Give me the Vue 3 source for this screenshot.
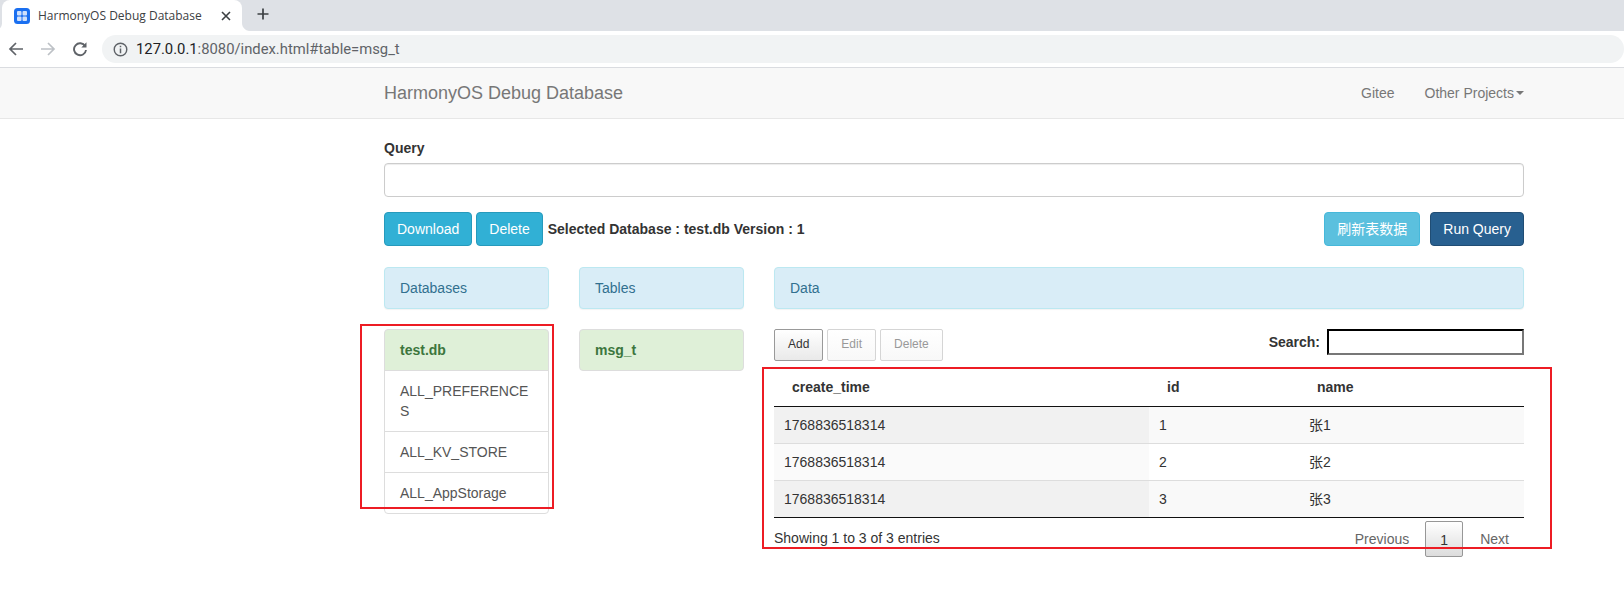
<script setup>
const lists = ['ALL_PREFERENCES', 'ALL_KV_STORE', 'ALL_AppStorage']
const rows = [
  { t: '1768836518314', id: 1, name: '张1' },
  { t: '1768836518314', id: 2, name: '张2' },
  { t: '1768836518314', id: 3, name: '张3' }
]
</script>

<template>
  <div class="page">
    <div class="tabstrip">
      <div class="tab">
        <svg class="favicon" width="16" height="16" viewBox="0 0 16 16">
          <rect width="16" height="16" rx="3.5" fill="#1a6ff0" />
          <rect x="3" y="3" width="4.5" height="4.5" rx="1" fill="#cfe0fb" />
          <rect x="8.5" y="3" width="4.5" height="4.5" rx="1" fill="#cfe0fb" />
          <rect x="3" y="8.5" width="4.5" height="4.5" rx="1" fill="#cfe0fb" />
          <rect x="8.5" y="8.5" width="4.5" height="4.5" rx="1" fill="#cfe0fb" />
        </svg>
        <span class="tabtitle">HarmonyOS Debug Database</span>
        <svg class="tabclose" width="10" height="10" viewBox="0 0 10 10">
          <path d="M1 1L9 9M9 1L1 9" stroke="#3c4043" stroke-width="1.6" fill="none" />
        </svg>
      </div>
      <svg class="newtab" width="12" height="12" viewBox="0 0 12 12">
        <path d="M6 0.5V11.5M0.5 6H11.5" stroke="#3c4043" stroke-width="1.7" fill="none" />
      </svg>
    </div>
    <div class="toolbar">
      <svg class="navicon" width="16" height="16" viewBox="0 0 16 16">
        <path d="M15 8H2M8 2L2 8L8 14" stroke="#5f6368" stroke-width="1.7" fill="none" />
      </svg>
      <svg class="navicon fwd" width="16" height="16" viewBox="0 0 16 16">
        <path d="M1 8H14M8 2L14 8L8 14" stroke="#bdc1c6" stroke-width="1.7" fill="none" />
      </svg>
      <svg class="navicon reload" width="16" height="16" viewBox="0 0 16 16">
        <path d="M13.2 5.2A6 6 0 1 0 14 9" stroke="#5f6368" stroke-width="1.9" fill="none" />
        <path d="M14.5 1.2V6.4H9.3Z" fill="#5f6368" />
      </svg>
      <div class="omnibox">
        <svg width="15" height="15" viewBox="0 0 16 16">
          <circle cx="8" cy="8" r="6.7" stroke="#5f6368" stroke-width="1.5" fill="none" />
          <path d="M8 7V12M8 4V5.6" stroke="#5f6368" stroke-width="1.6" fill="none" />
        </svg>
        <span class="url"><span class="host">127.0.0.1</span>:8080/index.html#table=msg_t</span>
      </div>
    </div>

    <nav class="navbar">
      <div class="container navinner">
        <span class="brand">HarmonyOS Debug Database</span>
        <div class="navlinks">
          <span>Gitee</span>
          <span class="dropdown">Other Projects<i class="caret"></i></span>
        </div>
      </div>
    </nav>

    <main class="container">
      <label class="qlabel">Query</label>
      <div class="qinput"></div>
      <div class="actions">
        <div class="actions-left">
          <button class="btn info-dark">Download</button>
          <button class="btn info-dark">Delete</button>
          <strong class="selected">Selected Database : test.db Version : 1</strong>
        </div>
        <div class="actions-right">
          <button class="btn info-light">刷新表数据</button>
          <button class="btn primary">Run Query</button>
        </div>
      </div>

      <div class="columns">
        <section>
          <div class="heading">Databases</div>
          <ul class="listgroup">
            <li class="active">test.db</li>
            <li v-for="l in lists" :key="l">{{ l }}</li>
          </ul>
        </section>
        <section>
          <div class="heading">Tables</div>
          <ul class="listgroup">
            <li class="active">msg_t</li>
          </ul>
        </section>
        <section>
          <div class="heading">Data</div>
          <div class="dt-top">
            <div class="dt-buttons">
              <button class="dtbtn">Add</button>
              <button class="dtbtn off">Edit</button>
              <button class="dtbtn off">Delete</button>
            </div>
            <div class="search"><b>Search:</b><span class="searchbox"></span></div>
          </div>
          <table class="dt">
            <colgroup>
              <col class="c1" /><col class="c2" /><col class="c3" />
            </colgroup>
            <thead>
              <tr><th>create_time</th><th>id</th><th>name</th></tr>
            </thead>
            <tbody>
              <tr v-for="r in rows" :key="r.id">
                <td class="sorted">{{ r.t }}</td>
                <td>{{ r.id }}</td>
                <td>{{ r.name }}</td>
              </tr>
            </tbody>
          </table>
          <div class="dt-bottom">
            <span class="info">Showing 1 to 3 of 3 entries</span>
            <div class="pager">
              <span class="plink prev">Previous</span>
              <span class="pcur">1</span>
              <span class="plink next">Next</span>
            </div>
          </div>
        </section>
      </div>
    </main>

    <div class="mark mark-a"></div>
    <div class="mark mark-b"></div>
  </div>
</template>

<style>
html, body { margin: 0; background: #fff; }
</style>

<style scoped>
.page {
  position: relative;
  width: 1624px;
  height: 590px;
  overflow: hidden;
  font-family: "Liberation Sans", Arial, "Noto Sans CJK SC", sans-serif;
  font-size: 14px;
  line-height: 20px;
  color: #333;
  background: #fff;
}
.tabstrip {
  height: 31px;
  background: #dee1e6;
  display: flex;
  align-items: flex-start;
  box-sizing: border-box;
  padding-left: 2px;
}
.tab {
  position: relative;
  width: 240px;
  height: 31px;
  box-sizing: border-box;
  background: #fff;
  border-radius: 8px 8px 0 0;
  display: flex;
  align-items: center;
  padding-left: 12px;
}
.tab::before,
.tab::after {
  content: "";
  position: absolute;
  bottom: 0;
  width: 8px;
  height: 8px;
}
.tab::before {
  left: -8px;
  background: radial-gradient(circle at 0 0, #dee1e6 7.5px, #fff 8.5px);
}
.tab::after {
  right: -8px;
  background: radial-gradient(circle at 100% 0, #dee1e6 7.5px, #fff 8.5px);
}
.favicon { flex: none; }
.tabtitle {
  margin-left: 8px;
  font-family: "Open Sans", "Noto Sans", sans-serif;
  font-size: 12px;
  color: #3c4043;
  width: 183px;
  white-space: nowrap;
}
.tabclose { margin-left: 0; }
.newtab { margin: 8px 0 0 15px; }
.toolbar {
  height: 36px;
  box-sizing: border-box;
  background: #fff;
  display: flex;
  align-items: center;
  padding-left: 8px;
}
.navicon { flex: none; }
.fwd { margin-left: 16px; }
.reload { margin-left: 16px; }
.omnibox {
  margin-left: 14px;
  flex: 1;
  height: 28px;
  background: #f1f3f4;
  border-radius: 14px;
  display: flex;
  align-items: center;
  padding-left: 11px;
}
.url {
  margin-left: 8px;
  font-family: Roboto, "Open Sans", sans-serif;
  font-size: 14.8px;
  color: #5f6368;
}
.host { color: #202124; }
.navbar {
  height: 52px;
  box-sizing: border-box;
  background: #f8f8f8;
  border-top: 1px solid #dadce0;
  border-bottom: 1px solid #e7e7e7;
}
.container {
  width: 1140px;
  margin-left: 384px;
}
.navinner {
  height: 50px;
  display: flex;
  justify-content: space-between;
  align-items: center;
}
.brand { font-size: 18px; color: #777; }
.navlinks { display: flex; gap: 30px; color: #777; }
.dropdown { display: flex; align-items: center; }
.caret {
  margin-left: 2px;
  border-top: 4px solid #777;
  border-left: 4px solid transparent;
  border-right: 4px solid transparent;
}
.qlabel {
  display: block;
  margin-top: 19px;
  height: 25px;
  font-weight: 700;
}
.qinput {
  height: 34px;
  box-sizing: border-box;
  border: 1px solid #ccc;
  border-radius: 4px;
  box-shadow: inset 0 1px 1px rgba(0, 0, 0, .075);
}
.actions {
  margin-top: 15px;
  display: flex;
  justify-content: space-between;
  align-items: center;
}
.actions-left, .actions-right { display: flex; align-items: center; }
.actions-left { gap: 4px; }
.actions-right { gap: 10px; }
.btn {
  height: 34px;
  padding: 0 12px;
  box-sizing: border-box;
  border: 1px solid transparent;
  border-radius: 4px;
  color: #fff;
  font: inherit;
}
.info-dark { background: #31b0d5; border-color: #269abc; }
.info-light { background: #5bc0de; border-color: #46b8da; }
.primary { background: #286090; border-color: #204d74; }
.selected { margin-left: 1px; }
.columns {
  margin-top: 21px;
  display: grid;
  grid-template-columns: 165px 165px 750px;
  column-gap: 30px;
}
.heading {
  height: 42px;
  box-sizing: border-box;
  padding: 10px 15px;
  background: #d9edf7;
  border: 1px solid #bce8f1;
  border-radius: 4px;
  box-shadow: 0 1px 1px rgba(0, 0, 0, .05);
  color: #31708f;
  line-height: 21px;
}
.listgroup {
  list-style: none;
  margin: 20px 0 0;
  padding: 0;
}
.listgroup li {
  padding: 10px 15px;
  border: 1px solid #ddd;
  margin-bottom: -1px;
  color: #555;
  word-break: break-all;
}
.listgroup li:first-child { border-radius: 4px 4px 0 0; }
.listgroup li:last-child { border-radius: 0 0 4px 4px; margin-bottom: 0; }
.listgroup li:only-child { border-radius: 4px; }
.listgroup li.active {
  background: #dff0d8;
  color: #3c763d;
  font-weight: 700;
}
.dt-top {
  margin-top: 20px;
  height: 38px;
  display: flex;
  justify-content: space-between;
}
.dt-buttons { display: flex; gap: 4px; }
.dtbtn {
  height: 32px;
  box-sizing: border-box;
  padding: 0 13px 2px;
  border: 1px solid #999;
  border-radius: 2px;
  background: linear-gradient(#fff, #e9e9e9);
  font: inherit;
  font-size: 12px;
  color: #333;
}
.dtbtn.off {
  border-color: #d5d5d5;
  background: linear-gradient(#fff, #f8f8f8);
  color: #999;
}
.search {
  display: flex;
  align-items: flex-start;
  gap: 7px;
  line-height: 26px;
}
.searchbox {
  width: 197px;
  height: 26px;
  box-sizing: border-box;
  border: 2px inset #767676;
  border-color: #222 #777 #777 #222;
}
.dt {
  width: 100%;
  table-layout: fixed;
  border-collapse: separate;
  border-spacing: 0;
}
.c1 { width: 375px; }
.c2 { width: 150px; }
.dt th {
  height: 40px;
  box-sizing: border-box;
  padding: 0 18px;
  text-align: left;
  font-weight: 700;
  color: #333;
  border-bottom: 1px solid #111;
}
.dt td {
  height: 37px;
  box-sizing: border-box;
  padding: 0 10px;
  border-bottom: 1px solid #ddd;
  background: #fff;
}
.dt tbody tr:nth-child(odd) td { background: #f9f9f9; }
.dt tbody tr:nth-child(odd) td.sorted { background: #f1f1f1; }
.dt tbody tr:nth-child(even) td { background: #fafafa; }
.dt tbody tr:nth-child(even) td:not(.sorted) { background: #fff; }
.dt tbody tr:last-child td { border-bottom-color: #111; }
.dt-bottom {
  display: flex;
  justify-content: space-between;
  padding-top: 3px;
}
.info { padding-top: 7px; }
.pager { display: flex; align-items: flex-start; padding-right: 15px; }
.plink { padding-top: 8px; color: #666; }
.prev { padding-right: 16px; }
.next { padding-left: 17px; }
.pcur {
  width: 38px;
  height: 36px;
  box-sizing: border-box;
  text-align: center;
  padding-top: 8px;
  border: 1px solid #979797;
  border-radius: 2px;
  background: linear-gradient(#fff, #dcdcdc);
  color: #333;
}
.mark {
  position: absolute;
  box-sizing: border-box;
  border: 2px solid #ed1c24;
  pointer-events: none;
}
.mark-a { left: 360px; top: 324px; width: 194px; height: 185px; }
.mark-b { left: 762px; top: 367px; width: 790px; height: 182px; }
</style>
